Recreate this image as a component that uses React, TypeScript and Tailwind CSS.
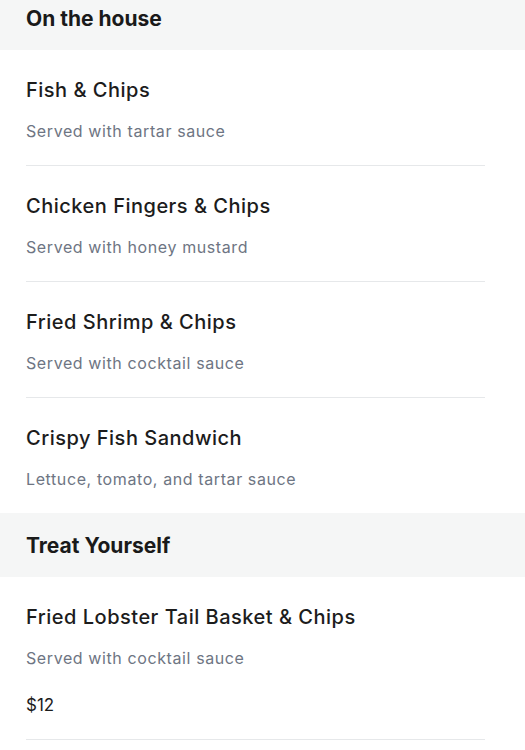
import React from "react";

type Item = { name: string; desc: string; price?: string };

const sections: { title: string; items: Item[] }[] = [
  {
    title: "On the house",
    items: [
      { name: "Fish & Chips", desc: "Served with tartar sauce" },
      { name: "Chicken Fingers & Chips", desc: "Served with honey mustard" },
      { name: "Fried Shrimp & Chips", desc: "Served with cocktail sauce" },
      { name: "Crispy Fish Sandwich", desc: "Lettuce, tomato, and tartar sauce" },
    ],
  },
  {
    title: "Treat Yourself",
    items: [
      { name: "Fried Lobster Tail Basket & Chips", desc: "Served with cocktail sauce", price: "$12" },
    ],
  },
];

function MenuItem({ item, last }: { item: Item; last: boolean }) {
  return (
    <div className={`pt-[28px] pb-[24px] mr-[40px] ${last ? "" : "border-b border-[#e6e8ea]"}`}>
      <p className="text-[20px] leading-[24px] font-medium tracking-[0.5px] text-[#1c1c1c]">{item.name}</p>
      <p className="mt-[19px] text-[16px] leading-[20px] tracking-[0.6px] text-[#6e7583]">{item.desc}</p>
      {item.price && <p className="mt-[27px] text-[17px] leading-[20px] text-[#1c1c1c]">{item.price}</p>}
    </div>
  );
}

export default function App() {
  return (
    <div className="w-[525px] h-[750px] overflow-hidden bg-white" style={{ fontFamily: "Inter, 'Open Sans', sans-serif" }}>
      <div className="-mt-[14px]">
        {sections.map((s, si) => (
          <section key={s.title}>
            <div className="h-[64px] flex items-center pl-[26px] pt-[2px] bg-[#f5f6f6]">
              <h2 className="text-[21px] font-bold text-[#1a1a1a]">{s.title}</h2>
            </div>
            <div className="pl-[26px]">
              {s.items.map((it, i) => (
                <MenuItem key={it.name} item={it} last={si === 0 && i === s.items.length - 1} />
              ))}
            </div>
          </section>
        ))}
      </div>
    </div>
  );
}
